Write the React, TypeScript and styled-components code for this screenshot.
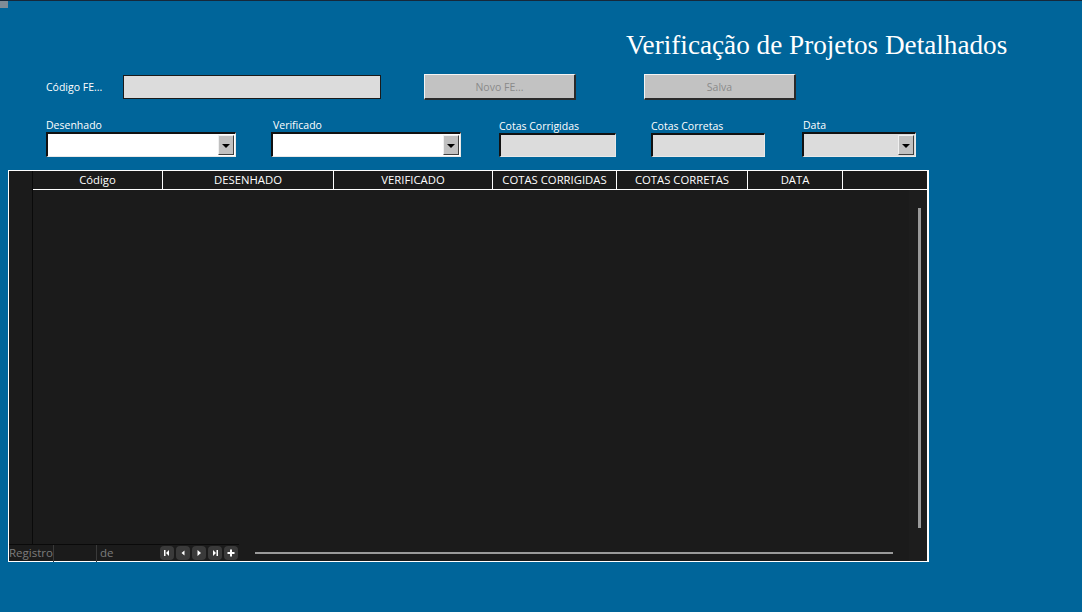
import React from "react";
import styled, { createGlobalStyle } from "styled-components";

const Global = createGlobalStyle`
  html, body { margin: 0; padding: 0; background: #00659a; }
  * { box-sizing: border-box; }
`;

const Page = styled.div`
  position: relative;
  width: 1082px;
  height: 612px;
  background: #00659a;
  border-top: 1px solid #16283a;
  font-family: "Open Sans", "Noto Sans", sans-serif;
  font-size: 10.5px;
  color: #ffffff;
  overflow: hidden;
`;

const Corner = styled.div`
  position: absolute;
  left: 0;
  top: 0;
  width: 8px;
  height: 7px;
  background: #7f8c97;
`;

const Title = styled.h1`
  margin: 0;
  padding: 27px 0 0 626px;
  height: 72px;
  font-family: "Liberation Serif", "Times New Roman", serif;
  font-weight: normal;
  font-size: 27.2px;
  line-height: 34px;
  color: #ffffff;
  white-space: nowrap;
`;

const Row1 = styled.div`
  display: flex;
  align-items: center;
  padding-left: 46px;
  height: 26px;
  margin-top: 1px;
`;

const Label = styled.span<{ $w?: number }>`
  display: inline-block;
  width: ${(p) => (p.$w ? `${p.$w}px` : "auto")};
  font-size: 10.5px;
  line-height: 14px;
  color: #ffffff;
  white-space: nowrap;
`;

const CodeInput = styled.div`
  width: 258px;
  height: 24px;
  background: #dcdcdc;
  border: 1px solid #1a1a1a;
`;

const Button = styled.div<{ $ml: number }>`
  margin-left: ${(p) => p.$ml}px;
  width: 152px;
  height: 26px;
  background: #c2c2c2;
  border-top: 1px solid #f4f4f4;
  border-left: 1px solid #f4f4f4;
  border-right: 2px solid #2a2a2a;
  border-bottom: 2px solid #2a2a2a;
  display: flex;
  align-items: center;
  justify-content: center;
  font-size: 10.5px;
  color: #8a8a8a;
`;

const Row2 = styled.div`
  display: flex;
  align-items: flex-end;
  padding-left: 46px;
  margin-top: 19px;
`;

const Field = styled.div<{ $w: number; $ml: number }>`
  display: flex;
  flex-direction: column;
  width: ${(p) => p.$w}px;
  margin-left: ${(p) => p.$ml}px;
`;

const FieldLabel = styled.span<{ $indent?: number }>`
  font-size: 10.5px;
  line-height: 13px;
  height: 13px;
  padding-left: ${(p) => p.$indent ?? 0}px;
  color: #ffffff;
  white-space: nowrap;
`;

const Combo = styled.div<{ $bg: string }>`
  position: relative;
  height: 25px;
  background: ${(p) => p.$bg};
  border-top: 2px solid #111;
  border-left: 2px solid #111;
  border-right: 1px solid #e8e8e8;
  border-bottom: 1px solid #e8e8e8;
  display: flex;
  justify-content: flex-end;
  align-items: stretch;
  padding: 1px 1px 1px 0;
`;

const DropBtn = styled.div`
  width: 16px;
  background: #c0c0c0;
  border-top: 1px solid #f0f0f0;
  border-left: 1px solid #f0f0f0;
  border-right: 1px solid #404040;
  border-bottom: 1px solid #404040;
  display: flex;
  align-items: center;
  justify-content: center;
  &::after {
    content: "";
    width: 0;
    height: 0;
    border-left: 4px solid transparent;
    border-right: 4px solid transparent;
    border-top: 4px solid #000;
    margin-top: 1px;
  }
`;

const TextBox = styled.div`
  height: 24px;
  background: #dcdcdc;
  border-top: 2px solid #111;
  border-left: 2px solid #111;
  border-right: 1px solid #e8e8e8;
  border-bottom: 1px solid #e8e8e8;
`;

const Sheet = styled.div`
  margin: 13px 0 0 8px;
  width: 921px;
  height: 392px;
  background: #1b1b1b;
  border: 1px solid #ffffff;
  border-right: 2px solid #ffffff;
  display: flex;
  flex-direction: column;
`;

const HeaderRow = styled.div`
  display: flex;
  height: 19px;
`;

const Selector = styled.div`
  width: 24px;
  flex: none;
  background: #1b1b1b;
  border-right: 1px solid #0a0a0a;
`;

const HeadCell = styled.div<{ $w?: number }>`
  ${(p) => (p.$w ? `width: ${p.$w}px; flex: none;` : "flex: 1;")}
  border-right: 1px solid #ffffff;
  border-bottom: 1px solid #ffffff;
  font-size: 11.3px;
  line-height: 18px;
  text-align: center;
  color: #ffffff;
  white-space: nowrap;
  overflow: hidden;
  &:last-child {
    border-right: none;
  }
`;

const Body = styled.div`
  flex: 1;
  display: flex;
`;

const BodyMain = styled.div`
  flex: 1;
`;

const VScroll = styled.div`
  width: 18px;
  flex: none;
  background: #1d1d1d;
  display: flex;
  justify-content: flex-end;
  padding: 18px 6px 16px 0;
  &::after {
    content: "";
    display: block;
    width: 3px;
    height: 100%;
    background: #9a9a9a;
  }
`;

const NavBar = styled.div`
  height: 17px;
  display: flex;
  align-items: center;
  background: #1b1b1b;
`;

const NavSection = styled.div`
  width: 230px;
  height: 17px;
  display: flex;
  align-items: center;
  border-top: 1px solid #0a0a0a;
`;

const NavText = styled.span<{ $w: number }>`
  width: ${(p) => p.$w}px;
  height: 17px;
  font-size: 11.5px;
  line-height: 16px;
  color: #7c7c7c;
  white-space: nowrap;
  border-right: 1px solid #3a3a3a;
  flex: none;
  &:last-of-type {
    border-right: none;
  }
`;

const NavButtons = styled.div`
  display: flex;
  gap: 2px;
`;

const NavBtn = styled.div`
  width: 14px;
  height: 14px;
  border-radius: 4px;
  background: #3a3a3a;
  display: flex;
  align-items: center;
  justify-content: center;
`;

const HScroll = styled.div`
  flex: 1;
  height: 17px;
  display: flex;
  align-items: center;
  padding: 0 16px 0 16px;
  &::after {
    content: "";
    display: block;
    width: 100%;
    height: 2px;
    background: #9a9a9a;
  }
`;

const Corner2 = styled.div`
  width: 18px;
  height: 17px;
  background: #1d1d1d;
`;

const First = () => (
  <svg width="8" height="8" viewBox="0 0 8 8">
    <rect x="1" y="1" width="1.5" height="6" fill="#fff" />
    <path d="M6 1 L3 4 L6 7 Z" fill="#fff" />
  </svg>
);
const Prev = () => (
  <svg width="8" height="8" viewBox="0 0 8 8">
    <path d="M5.5 1.5 L2.5 4 L5.5 6.5 Z" fill="#fff" />
  </svg>
);
const Next = () => (
  <svg width="8" height="8" viewBox="0 0 8 8">
    <path d="M2.5 1 L6 4 L2.5 7 Z" fill="#fff" />
  </svg>
);
const Last = () => (
  <svg width="8" height="8" viewBox="0 0 8 8">
    <path d="M2 1 L5 4 L2 7 Z" fill="#fff" />
    <rect x="5.5" y="1" width="1.5" height="6" fill="#fff" />
  </svg>
);
const Plus = () => (
  <svg width="8" height="8" viewBox="0 0 8 8">
    <rect x="3" y="0.5" width="2" height="7" fill="#fff" />
    <rect x="0.5" y="3" width="7" height="2" fill="#fff" />
  </svg>
);

const columns: { label: string; w?: number }[] = [
  { label: "Código", w: 130 },
  { label: "DESENHADO", w: 171 },
  { label: "VERIFICADO", w: 159 },
  { label: "COTAS CORRIGIDAS", w: 124 },
  { label: "COTAS CORRETAS", w: 131 },
  { label: "DATA", w: 95 },
  { label: "" },
];

export default function App() {
  return (
    <>
      <Global />
      <Page>
        <Corner />
        <Title>Verificação de Projetos Detalhados</Title>
        <Row1>
          <Label $w={77}>Código FE...</Label>
          <CodeInput />
          <Button $ml={43}>Novo FE...</Button>
          <Button $ml={68}>Salva</Button>
        </Row1>
        <Row2>
          <Field $w={190} $ml={0}>
            <FieldLabel>Desenhado</FieldLabel>
            <Combo $bg="#ffffff">
              <DropBtn />
            </Combo>
          </Field>
          <Field $w={190} $ml={35}>
            <FieldLabel $indent={2}>Verificado</FieldLabel>
            <Combo $bg="#ffffff">
              <DropBtn />
            </Combo>
          </Field>
          <Field $w={117} $ml={38}>
            <FieldLabel>Cotas Corrigidas</FieldLabel>
            <TextBox />
          </Field>
          <Field $w={114} $ml={35}>
            <FieldLabel>Cotas Corretas</FieldLabel>
            <TextBox />
          </Field>
          <Field $w={114} $ml={37}>
            <FieldLabel $indent={1}>Data</FieldLabel>
            <Combo $bg="#dcdcdc">
              <DropBtn />
            </Combo>
          </Field>
        </Row2>
        <Sheet>
          <HeaderRow>
            <Selector />
            {columns.map((c, i) => (
              <HeadCell key={i} $w={c.w}>
                {c.label}
              </HeadCell>
            ))}
          </HeaderRow>
          <Body>
            <Selector />
            <BodyMain />
            <VScroll />
          </Body>
          <NavBar>
            <NavSection>
              <NavText $w={45}>Registro</NavText>
              <NavText $w={43}> </NavText>
              <NavText $w={63}>&nbsp;de</NavText>
              <NavButtons>
                <NavBtn><First /></NavBtn>
                <NavBtn><Prev /></NavBtn>
                <NavBtn><Next /></NavBtn>
                <NavBtn><Last /></NavBtn>
                <NavBtn><Plus /></NavBtn>
              </NavButtons>
            </NavSection>
            <HScroll />
            <Corner2 />
          </NavBar>
        </Sheet>
      </Page>
    </>
  );
}
